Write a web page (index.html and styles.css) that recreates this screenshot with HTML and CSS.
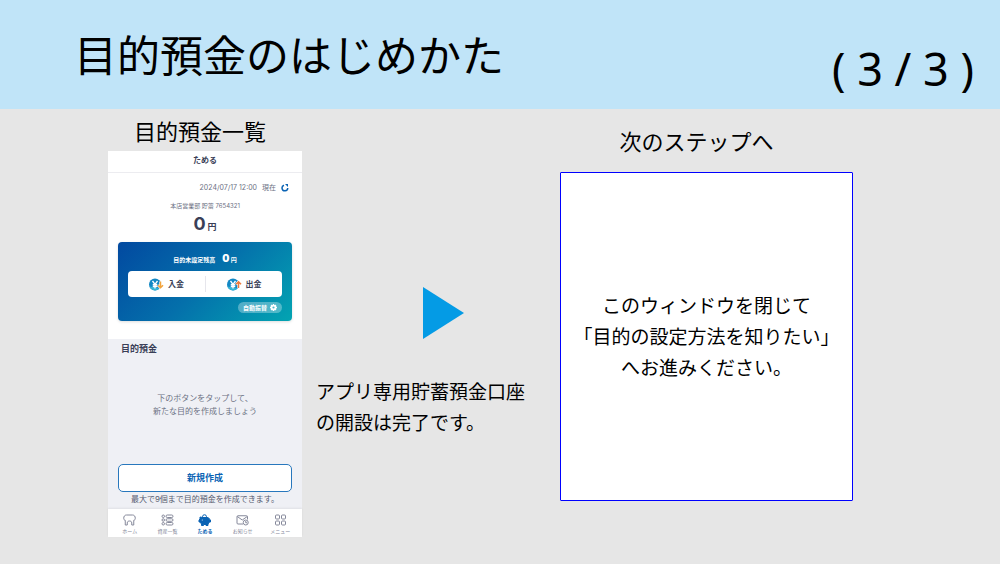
FILE: index.html
```html
<!DOCTYPE html>
<html lang="ja">
<head>
<meta charset="utf-8">
<meta name="viewport" content="width=device-width, initial-scale=1">
<title>目的預金のはじめかた</title>
<link rel="stylesheet" href="styles.css">
</head>
<body>
<header class="banner">
  <h1 class="banner-title">目的預金のはじめかた</h1>
  <p class="banner-page">( 3 / 3 )</p>
</header>
<main class="steps">
  <section class="step-phone">
    <h2 class="caption">目的預金一覧</h2>
    <div class="phone">
      <div class="phone-title">ためる</div>
      <div class="summary">
        <div class="updated">
          <span>2024/07/17 12:00</span>
          <span>現在</span>
          <button class="refresh" type="button" aria-label="更新">
            <svg viewBox="0 0 16 16" width="8" height="8"><path d="M6 2.500A5.700 5.700 0 1 0 13.500 8" fill="none" stroke="#0a63b4" stroke-width="3"/><path d="M8 0h6v6z" fill="#0a63b4"/></svg>
          </button>
        </div>
        <div class="account">本店営業部 貯蓄 7654321</div>
        <div class="total"><span class="total-value">0</span><span class="total-unit">円</span></div>
        <div class="card">
          <div class="card-balance"><span>目的未設定残高</span><span><b class="card-value">0</b> 円</span></div>
          <div class="card-actions">
            <button class="card-action" type="button">
              <svg viewBox="0 0 30 26" width="15" height="13"><circle cx="12" cy="13" r="12" fill="#1287c4"/><path d="M1 17a12 12 0 0 0 20 4z" fill="#35b5d6"/><path d="M7 6l5 7 5-7M12 13v8M7.500 13.500h9M7.500 17h9" fill="none" stroke="#fff" stroke-width="2.600"/><path d="M23 7v12M18 14.500l5 5 5-5" fill="none" stroke="#fff" stroke-width="5"/><path d="M23 7v12M18 14.500l5 5 5-5" fill="none" stroke="#f2a33c" stroke-width="3"/></svg>
              入金
            </button>
            <button class="card-action" type="button">
              <svg viewBox="0 0 30 26" width="15" height="13"><circle cx="12" cy="13" r="12" fill="#1287c4"/><path d="M1 17a12 12 0 0 0 20 4z" fill="#35b5d6"/><path d="M7 6l5 7 5-7M12 13v8M7.500 13.500h9M7.500 17h9" fill="none" stroke="#fff" stroke-width="2.600"/><path d="M23 20V8M18 12.500l5-5 5 5" fill="none" stroke="#fff" stroke-width="5"/><path d="M23 20V8M18 12.500l5-5 5 5" fill="none" stroke="#ee7a3b" stroke-width="3"/></svg>
              出金
            </button>
          </div>
          <button class="chip" type="button">自動振替
            <svg viewBox="0 0 16 16" width="7" height="7"><circle cx="8" cy="8" r="4.500" fill="none" stroke="#fff" stroke-width="4"/><path d="M8 0v3M8 13v3M0 8h3M13 8h3M2.300 2.300l2 2M11.700 11.700l2 2M2.300 13.700l2-2M11.700 4.300l2-2" stroke="#fff" stroke-width="3"/></svg>
          </button>
        </div>
      </div>
      <div class="goals">
        <h3 class="goals-title">目的預金</h3>
        <p class="goals-hint">下のボタンをタップして、<br>新たな目的を作成しましょう</p>
        <button class="create" type="button">新規作成</button>
        <p class="goals-note">最大で9個まで目的預金を作成できます。</p>
      </div>
      <nav class="tabs">
        <a class="tab" href="#"><svg viewBox="0 0 26 24" width="13" height="12"><path d="M7 2h12c4 0 5.500 3 5.500 6.500 0 2.500-1 4-3 4V22h-4v-4c0-3-2-4-4.500-4s-4.500 1-4.500 4v4h-4v-9.500c-2 0-3-1.500-3-4C1.500 5 3 2 7 2z"/></svg>ホーム</a>
        <a class="tab" href="#"><svg viewBox="0 0 26 24" width="13" height="12"><circle cx="4.500" cy="4.500" r="2.500"/><circle cx="4.500" cy="12" r="2.500"/><circle cx="4.500" cy="19.500" r="2.500"/><rect x="10" y="2" width="14" height="5" rx="2.500"/><rect x="10" y="9.500" width="14" height="5" rx="2.500"/><rect x="10" y="17" width="14" height="5" rx="2.500"/></svg>資産一覧</a>
        <a class="tab tab-current" href="#" aria-current="page"><svg viewBox="0 0 26 24" width="13" height="12"><path d="M9 9V5.500a4 4 0 0 1 8 0V9" fill="none" stroke="#0a63b4" stroke-width="2"/><path d="M4 6l5 1h9c3 0 5 2 5.500 4l1.500 1v4h-2l-3 4v3h-4v-2h-5v2H7v-3l-3-4H2v-4l2-2z" fill="#0a63b4" stroke="#0a63b4" stroke-linejoin="round"/><circle cx="8.500" cy="12" r="1" fill="#fff" stroke="none"/></svg>ためる</a>
        <a class="tab" href="#"><svg viewBox="0 0 26 24" width="13" height="12"><path d="M14 20H4a2 2 0 0 1-2-2V5.500a2 2 0 0 1 2-2h17a2 2 0 0 1 2 2V11M2.500 5l10 7 10-7"/><circle cx="19.500" cy="17" r="5"/><path d="M19.500 14v3.500h3"/></svg>お知らせ</a>
        <a class="tab" href="#"><svg viewBox="0 0 26 24" width="13" height="12"><rect x="3" y="2" width="8" height="8" rx="2"/><rect x="15" y="2" width="8" height="8" rx="2"/><rect x="3" y="14" width="8" height="8" rx="2"/><rect x="15" y="14" width="8" height="8" rx="2"/></svg>メニュー</a>
      </nav>
    </div>
  </section>
  <section class="step-done">
    <svg class="arrow" viewBox="0 0 41 52" width="41" height="52" aria-hidden="true"><path d="M0 0l41 26L0 52z" fill="#049be5"/></svg>
    <p class="done-text">アプリ専用貯蓄預金口座<br>の開設は完了です。</p>
  </section>
  <section class="step-next">
    <h2 class="caption caption-next">次のステップへ</h2>
    <div class="next-box"><p>このウィンドウを閉じて<br>「目的の設定方法を知りたい」<br>へお進みください。</p></div>
  </section>
</main>
</body>
</html>
```

FILE: styles.css
```css
* {
  box-sizing: border-box;
}

body {
  margin: 0;
  min-height: 100vh;
  background: #e6e6e6;
  color: #000;
  font-family: "Noto Sans CJK JP", sans-serif;
}

h1, h2, h3, p {
  margin: 0;
  font-weight: 400;
}

button {
  margin: 0;
  padding: 0;
  border: 0;
  background: none;
  color: inherit;
  font: inherit;
}

svg {
  display: block;
  flex: none;
}

.banner {
  display: flex;
  justify-content: space-between;
  padding: 21px 26px 8px 74px;
  background: #c0e4f8;
}

.banner-title {
  font-size: 43px;
  line-height: 64px;
}

.banner-page {
  padding-top: 16px;
  font-family: "Noto Sans", sans-serif;
  font-size: 45px;
  line-height: 64px;
}

.steps {
  display: grid;
  grid-template-columns: 194fr 230fr 293fr;
  gap: 14px;
  align-items: start;
  padding: 5px 147px 24px 108px;
}

.caption {
  padding: 0 10px 5px 0;
  font-size: 22px;
  line-height: 32px;
  text-align: center;
}

.phone {
  background: #fff;
  color: #3a3f57;
  font-family: Inter, "Noto Sans CJK JP", sans-serif;
  font-size: 8px;
  line-height: 12px;
}

.phone-title {
  padding: 3px 0 6px;
  border-bottom: 1px solid #ececf0;
  font-weight: 700;
  text-align: center;
}

.summary {
  padding: 9px 10px 18px;
}

.updated {
  display: flex;
  justify-content: flex-end;
  align-items: center;
  gap: 5px;
  padding-right: 3px;
  color: #6c7083;
  font-size: 7px;
}

.account {
  padding-top: 6px;
  color: #6c7083;
  font-size: 6px;
  text-align: center;
}

.total {
  display: flex;
  justify-content: center;
  align-items: baseline;
  gap: 2px;
  padding: 1px 0 5px;
  font-weight: 700;
  line-height: 21px;
}

.total-value {
  font-size: 18px;
}

.total-unit {
  font-size: 9px;
}

.card {
  display: flex;
  flex-direction: column;
  padding: 8px 10px;
  border-radius: 4px;
  background: linear-gradient(135deg, #0249a0, #0470ab 50%, #03a4b2);
  box-shadow: 0 1px 3px #0002;
  color: #fff;
}

.card-balance {
  display: flex;
  justify-content: center;
  align-items: baseline;
  gap: 7px;
  height: 21px;
  font-size: 6px;
  font-weight: 700;
  line-height: 16px;
}

.card-value {
  font-size: 10px;
}

.card-actions {
  display: grid;
  grid-template-columns: 1fr 1fr;
  padding: 5px 0;
  border-radius: 4px;
  background: #fff;
  color: #3a3f57;
}

.card-action {
  display: flex;
  justify-content: center;
  align-items: center;
  gap: 4px;
  font-weight: 700;
  line-height: 16px;
}

.card-action + .card-action {
  border-left: 1px solid #e6e6ec;
}

.chip {
  display: flex;
  align-items: center;
  align-self: flex-end;
  gap: 3px;
  margin-top: 5px;
  padding: 0 5px;
  border-radius: 6px;
  background: #ffffff50;
  font-size: 6px;
  font-weight: 700;
  line-height: 11px;
}

.goals {
  padding: 3px 10px;
  background: #eff0f5;
  text-align: center;
}

.goals-title {
  padding-left: 3px;
  font-size: 9px;
  font-weight: 700;
  line-height: 13px;
  text-align: left;
}

.goals-hint {
  padding: 37px 0 46px;
  color: #6c7083;
  line-height: 13px;
}

.create {
  width: 100%;
  border: 1px solid #2877bd;
  border-radius: 5px;
  background: #fff;
  color: #0a63b4;
  font-size: 9px;
  font-weight: 700;
  line-height: 26px;
}

.goals-note {
  color: #565b70;
  line-height: 14px;
}

.tabs {
  display: grid;
  grid-template-columns: repeat(5, 1fr);
  padding: 5px 3px 2px;
  box-shadow: 0 -1px 2px #0001;
}

.tab {
  display: flex;
  flex-direction: column;
  align-items: center;
  gap: 1px;
  color: #85889a;
  font-size: 5px;
  line-height: 8px;
  text-decoration: none;
}

.tab svg {
  fill: none;
  stroke: #85889a;
  stroke-width: 2;
}

.tab-current {
  color: #0a63b4;
  font-weight: 700;
}

.step-done {
  padding-top: 173px;
}

.arrow {
  margin: 0 auto 36px 107px;
}

.done-text {
  font-size: 19px;
  line-height: 31px;
  white-space: nowrap;
}

.caption-next {
  padding: 10px 20px 16px 0;
}

.next-box {
  display: grid;
  place-items: center;
  min-height: 329px;
  padding-bottom: 2px;
  border: 1px solid #00f;
  border-radius: 1px;
  background: #fff;
  font-size: 19px;
  line-height: 31px;
  text-align: center;
  white-space: nowrap;
}
```
